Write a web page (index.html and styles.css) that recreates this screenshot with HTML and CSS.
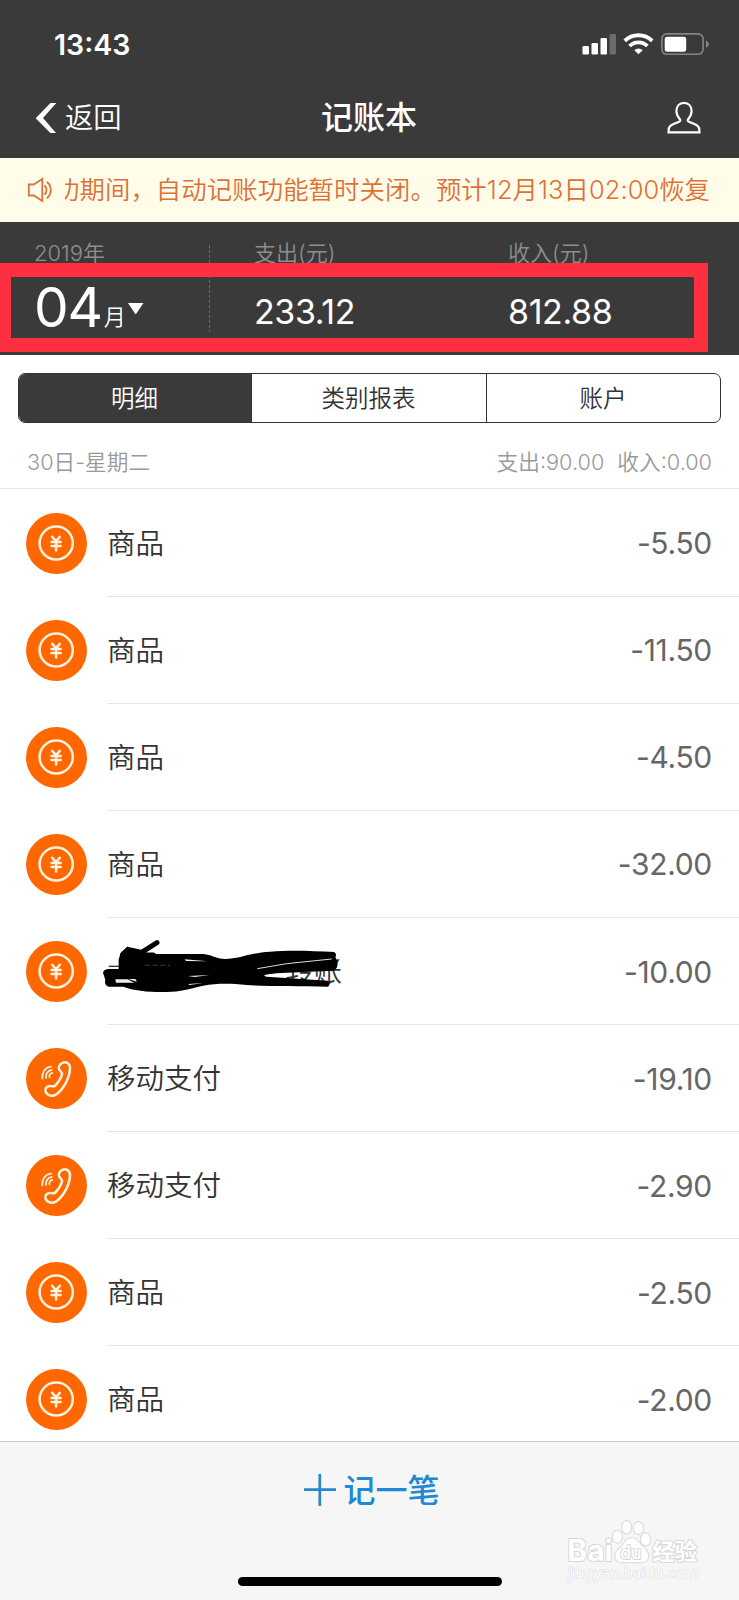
FILE: index.html
```html
<!DOCTYPE html>
<html lang="zh-CN">
<head>
<meta charset="utf-8">
<title>记账本</title>
<link rel="stylesheet" href="styles.css">
</head>
<body>
<svg class="defs" width="0" height="0">
  <symbol id="coin" viewBox="0 0 61 61">
    <circle cx="30.5" cy="30.5" r="30.5" fill="#ff6700"/>
    <circle cx="30.200" cy="30" r="16.600" fill="none" stroke="#fff3e0" stroke-width="2.500"/>
    <path d="M26.200 23.800l3.800 4.300 3.800-4.300M25.500 29h9.200M25.500 33.100h9.200M30.100 28.500v9" fill="none" stroke="#fff3e0" stroke-width="2.500" stroke-linecap="round"/>
  </symbol>
  <symbol id="phone" viewBox="0 0 61 61">
    <circle cx="30.5" cy="30.5" r="30.5" fill="#ff6700"/>
    <path d="M36 15.200C40 13 44.200 15.500 44 20.500C43.800 29 38.500 40 30.800 46C26.500 49.300 20.500 47.500 19.400 43C18.700 39.800 21.500 38 24.500 38.100C27 38.100 27.800 39 29.300 37.500C32.500 34.300 35 30 36 26.500C36.600 24.300 34.800 24 33.400 22C31.800 19.500 33.300 16.700 36 15.200Z" fill="none" stroke="#fff3e0" stroke-width="2.500" stroke-linejoin="round"/>
    <path d="M16.300 30.500C15.700 24.500 19 19.200 25.200 18.500M20 30C19.600 25.800 22 22.300 25.800 21.800M23.400 29.300C23.200 27 24.300 25.300 26.300 24.900" fill="none" stroke="#fff3e0" stroke-width="1.700" stroke-linecap="round"/>
  </symbol>
</svg>
<div class="app">
  <header class="top">
    <div class="status">
      <span class="clock">13:43</span>
      <svg class="signals" width="128" height="24" viewBox="0 0 128 24">
        <g fill="#fff">
          <rect x="0.500" y="13" width="6.500" height="8.500" rx="1.200"/>
          <rect x="9.500" y="10" width="6.500" height="11.500" rx="1.200"/>
          <rect x="18.500" y="5" width="6.500" height="16.500" rx="1.200"/>
          <rect x="27.500" y="1" width="6.500" height="20.500" rx="1.200" opacity=".25"/>
        </g>
        <g fill="none" stroke="#fff" stroke-width="3.800">
          <path d="M42.800 7.900a19.400 19.400 0 0 1 27.400 0"/>
          <path d="M47.600 13a12.600 12.600 0 0 1 17.800 0"/>
        </g>
        <path d="M56.500 21.300l-4.200-4.100a6 6 0 0 1 8.400 0z" fill="#fff"/>
        <rect x="79.900" y="0.900" width="41.200" height="20.400" rx="5" fill="none" stroke="#858585" stroke-width="1.600"/>
        <rect x="82.700" y="3.700" width="21.500" height="15" rx="2.500" fill="#fff"/>
        <path d="M124 7.500c3.700 1.500 3.700 5.700 0 7.200z" fill="#858585"/>
      </svg>
    </div>
    <nav class="nav">
      <div class="back">
        <svg width="22" height="32" viewBox="0 0 22 32"><path d="M15.500 1H21.300L8 16l13 15h-5.600L0.700 16.200z" fill="#fff"/></svg>
        <span>返回</span>
      </div>
      <h1>记账本</h1>
      <svg class="user" width="34" height="34" viewBox="0 0 34 34"><path d="M17 1.900c4.700 0 7.600 3.500 7.600 8.200 0 3.500-1.600 6-3.500 8.200-.8 1-.4 2 .8 2.500l5.500 2.200c3.200 1.300 5 3 5 6v2.400H1.600V29c0-3 1.800-4.700 5-6l5.500-2.200c1.200-.5 1.600-1.500.8-2.500-1.900-2.200-3.500-4.700-3.500-8.200 0-4.700 2.900-8.200 7.600-8.200z" fill="none" stroke="#fff" stroke-width="2.200"/></svg>
    </nav>
  </header>

  <div class="notice">
    <svg width="28" height="26" viewBox="0 0 28 26" fill="none" stroke="#d67a41" stroke-width="1.900"><path d="M1.800 7.500h5L15.300 2v22L6.800 18.500h-5z"/><path d="M18 9c2 2 2 6 0 8M20.300 5.300c4.700 4 4.700 11.500 0 15.500" stroke-linecap="round"/></svg>
    <div class="ticker"><span>功期间，自动记账功能暂时关闭。预计12月13日02:00恢复</span></div>
  </div>

  <section class="summary">
    <div class="period">
      <div class="label">2019年</div>
      <div class="month"><b>04</b><span>月</span><svg width="16" height="12" viewBox="0 0 16 12"><path d="M0 0h15.500L7.700 11.500z" fill="#fff"/></svg></div>
    </div>
    <div class="total out"><div class="label">支出(元)</div><div class="sum">233.12</div></div>
    <div class="total in"><div class="label">收入(元)</div><div class="sum">812.88</div></div>
    <div class="marker"></div>
  </section>

  <div class="tabs">
    <div class="tab on">明细</div>
    <div class="tab">类别报表</div>
    <div class="tab">账户</div>
  </div>

  <div class="day"><span>30日-星期二</span><span class="daysum"><span>支出:90.00</span><span>收入:0.00</span></span></div>

  <main class="list">
    <div class="row"><svg class="ico"><use href="#coin"/></svg><div class="cell"><span>商品</span><em>-5.50</em></div></div>
    <div class="row"><svg class="ico"><use href="#coin"/></svg><div class="cell"><span>商品</span><em>-11.50</em></div></div>
    <div class="row"><svg class="ico"><use href="#coin"/></svg><div class="cell"><span>商品</span><em>-4.50</em></div></div>
    <div class="row"><svg class="ico"><use href="#coin"/></svg><div class="cell"><span>商品</span><em>-32.00</em></div></div>
    <div class="row"><svg class="ico"><use href="#coin"/></svg><div class="cell"><span class="covered">转账</span><em>-10.00</em>
      <svg class="scribble" width="250" height="90" viewBox="0 0 750 270">
        <path d="M26 139h34" stroke="#333" stroke-width="4"/>
        <path d="M68 103L84 88L125 97L171 68M84 88L80 105H160" fill="none" stroke="#000" stroke-width="15" stroke-linecap="round" stroke-linejoin="round"/>
        <path d="M62 100L165 102H310C335 104 348 117 375 117C420 117 450 98 510 95C570 90 640 93 702 96Q712 102 706 111L712 122Q716 146 700 152L560 158C500 161 480 165 500 170L684 182Q694 191 684 200C590 198 500 200 440 195C390 190 350 190 310 197C270 206 240 215 200 216C150 217 100 212 70 200H26Q12 196 16 180L9 158Q12 147 26 147H56V118Z" fill="#000"/>
        <path d="M46 178H82L103 188H48ZM84 177h22l5 8ZM264 168l65-3-45 6ZM265 192l45-3-42 6ZM254 118l70 6-66-1Z" fill="#eee"/>
        <path d="M472 146L560 131L695 117" stroke="#ddd" stroke-width="3" fill="none"/>
        <path d="M135 136h75" stroke="#777" stroke-width="1.500" stroke-dasharray="14 9"/>
      </svg></div></div>
    <div class="row"><svg class="ico"><use href="#phone"/></svg><div class="cell"><span>移动支付</span><em>-19.10</em></div></div>
    <div class="row"><svg class="ico"><use href="#phone"/></svg><div class="cell"><span>移动支付</span><em>-2.90</em></div></div>
    <div class="row"><svg class="ico"><use href="#coin"/></svg><div class="cell"><span>商品</span><em>-2.50</em></div></div>
    <div class="row"><svg class="ico"><use href="#coin"/></svg><div class="cell"><span>商品</span><em>-2.00</em></div></div>
  </main>

  <footer class="foot">
    <div class="add"><svg width="32" height="32" viewBox="0 0 32 32"><path d="M0 15.700h32M15.800 0v32" stroke="#2a86cb" stroke-width="2.700"/></svg><span>记一笔</span></div>
    <div class="home"></div>
    <svg class="watermark" width="199" height="100" viewBox="0 0 597 300">
      <g fill="#fff" stroke="#d8d8d8" stroke-width="6" paint-order="stroke" stroke-linejoin="round">
        <text class="wm-latin" x="82" y="184" textLength="136" lengthAdjust="spacingAndGlyphs">Bai</text>
        <ellipse cx="232" cy="110" rx="14" ry="18"/><ellipse cx="260" cy="82" rx="13" ry="19"/><ellipse cx="295" cy="84" rx="14" ry="18"/><ellipse cx="317" cy="118" rx="14" ry="18"/>
        <path d="M274 115C292 115 298 131 308 141C318 150 324 155 324 168C324 182 316 187 303 187H247C232 187 226 180 226 168C226 154 236 148 245 140C255 130 258 115 274 115Z"/>
        <text class="wm-du" x="241" y="176" textLength="63" lengthAdjust="spacingAndGlyphs">du</text>
        <text class="wm-cjk" x="337" y="179" textLength="134" lengthAdjust="spacingAndGlyphs">经验</text>
        <text class="wm-url" x="82" y="235" textLength="393" lengthAdjust="spacingAndGlyphs">jingyan.baidu.com</text>
      </g>
    </svg>
  </footer>
</div>
</body>
</html>
```

FILE: styles.css
```css
* { box-sizing: border-box; }
body {
  margin: 0;
  background: #fff;
  font-family: Inter, "Noto Sans CJK SC", sans-serif;
  color: #333;
}
.defs { position: absolute; }
.app {
  width: 739px;
  height: 1600px;
  overflow: hidden;
  display: flex;
  flex-direction: column;
}
.top { height: 158px; flex: none; background: #3a3a3a; color: #fff; }
.status {
  height: 80px;
  padding: 9px 29px 0 54px;
  display: flex;
  align-items: center;
  justify-content: space-between;
}
.clock { font-size: 28.5px; font-weight: 600; line-height: 30px; }
.nav {
  height: 76px;
  padding: 0 38px 0 35px;
  display: grid;
  grid-template-columns: 1fr auto 1fr;
  align-items: center;
}
.back { display: flex; align-items: center; gap: 8px; font-size: 28.3px; font-weight: 350; line-height: 40px; }
.nav h1 { margin: 0; padding-left: 2px; font-size: 32px; font-weight: 500; line-height: 44px; }
.user { justify-self: end; }

.notice {
  height: 63.5px;
  flex: none;
  padding: 0 28px 0 27px;
  display: flex;
  align-items: center;
  gap: 10px;
  background: #fffde9;
  color: #de7035;
}
.ticker { flex: 1; overflow: hidden; white-space: nowrap; font-size: 25.4px; font-weight: 350; line-height: 40px; }
.ticker span { margin-left: -11px; letter-spacing: .07px; }

.summary {
  position: relative;
  height: 133.5px;
  flex: none;
  padding-top: 18px;
  display: flex;
  background: #3a3a3a;
  color: #fff;
}
.label { font-size: 22px; font-weight: 350; line-height: 26px; color: #8e8e8e; }
.period {
  width: 210px;
  height: 92px;
  padding-left: 34px;
  background: repeating-linear-gradient(#6b6b6b 0 3px, transparent 3px 5px) 209px 5px / 1px 87px no-repeat;
}
.month { display: flex; align-items: baseline; padding-top: 13.5px; line-height: 56px; }
.month b { font-size: 55px; font-weight: 380; letter-spacing: -1.2px; }
.month span { font-size: 22px; font-weight: 350; padding-left: 2px; position: relative; top: -2px; }
.month svg { align-self: flex-start; margin: 24px 0 0 2px; }
.out { width: 298px; padding-left: 44px; }
.sum { font-size: 34px; font-weight: 380; line-height: 40px; padding-top: 26px; letter-spacing: -.4px; }
.marker {
  position: absolute;
  left: -3px;
  top: 41.5px;
  width: 711px;
  height: 89px;
  border: 14px solid #ff2f42;
}

.tabs {
  height: 50px;
  flex: none;
  margin: 18px 18px 0;
  display: grid;
  grid-template-columns: 232px 235px 1fr;
  border: 1.5px solid #333;
  border-radius: 7px;
  overflow: hidden;
}
.tab {
  display: flex;
  align-items: center;
  justify-content: center;
  padding: 1px 1px 0 0;
  font-size: 23.5px;
  font-weight: 350;
  line-height: 34px;
}
.tab + .tab { border-left: 1.5px solid #333; }
.tab.on { background: #3a3a3a; color: #fff; }

.day {
  height: 66px;
  flex: none;
  padding: 9px 27px 0 27px;
  display: flex;
  align-items: center;
  justify-content: space-between;
  border-bottom: 1px solid #e6e6e6;
  color: #999;
  font-size: 21.7px;
  font-weight: 350;
}
.daysum { display: flex; gap: 13px; }

.list { height: 952px; flex: none; overflow: hidden; padding-top: .6px; }
.row { height: 107.1px; padding-left: 26px; display: flex; align-items: center; gap: 20px; }
.ico { width: 61px; height: 61px; flex: none; }
.cell {
  position: relative;
  flex: 1;
  height: 107.1px;
  padding-right: 27px;
  display: flex;
  align-items: center;
  justify-content: space-between;
  border-bottom: 1px solid #e5e5e5;
  font-size: 28.5px;
  font-weight: 350;
}
.cell > span { padding-bottom: 3px; }
.cell em { font-style: normal; font-weight: 380; font-size: 30px; letter-spacing: -.3px; color: #666; padding-top: 1px; }
.cell .covered { padding-left: 178px; }
.scribble { position: absolute; left: -7px; top: 2px; }

.foot {
  position: relative;
  height: 159px;
  flex: none;
  padding-top: 34px;
  display: flex;
  flex-direction: column;
  align-items: center;
  justify-content: space-between;
  background: #f6f6f6;
  border-top: 1px solid #c8c8c8;
}
.add { display: flex; align-items: center; gap: 7px; height: 32px; padding-left: 5px; color: #2088d4; font-size: 32px; font-weight: 500; }
.add svg { margin-bottom: 5px; }
.add span { margin-top: -9px; }
.home { width: 264px; height: 9px; margin-bottom: 14px; border-radius: 5px; background: #000; }
.watermark { position: absolute; right: 0; bottom: 0; }
.wm-latin { font: 700 88px Inter, sans-serif; }
.wm-du { font: 500 54px Inter, sans-serif; }
.wm-cjk { font: 700 68px "Noto Sans CJK SC", sans-serif; }
.wm-url { font: 400 45px "Noto Sans", sans-serif; stroke-width: 3px; }
```
